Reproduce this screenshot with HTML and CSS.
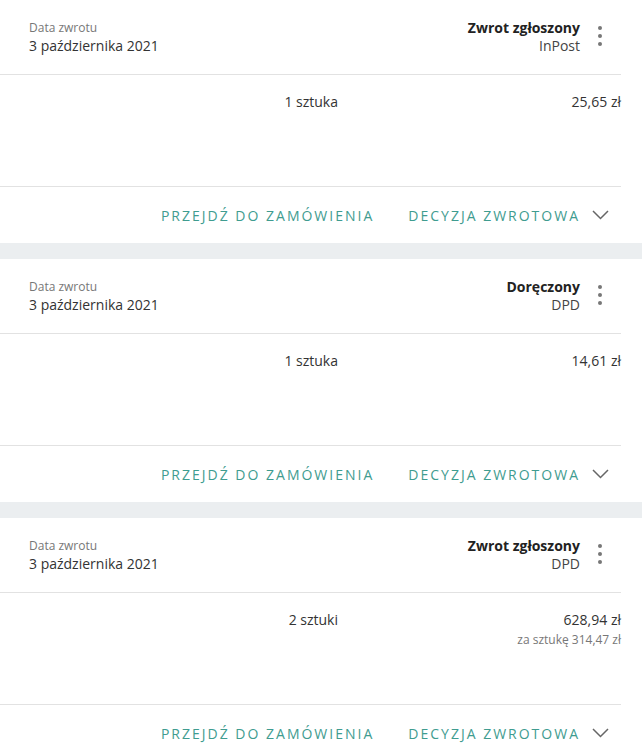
FILE: index.html
```html
<!DOCTYPE html>
<html lang="pl">
    <head>
        <meta charset="UTF-8" />
        <meta name="viewport" content="width=device-width, initial-scale=1.0" />
        <title>Zwroty</title>
        <link rel="stylesheet" href="styles.css">
    </head>
    <body>
        <div class="list">
            <div class="card">
                <div class="cardHead">
                    <div class="date">
                        <span class="label">Data zwrotu</span>
                        <span class="value">3 października 2021</span>
                    </div>
                    <div class="status">
                        <span class="statusName">Zwrot zgłoszony</span>
                        <span class="carrier">InPost</span>
                    </div>
                    <button class="more" aria-label="Więcej"><i></i><i></i><i></i></button>
                </div>
                <div class="cardBody">
                    <div class="qty">1 sztuka</div>
                    <div class="price">
                        <span class="total">25,65 zł</span>
                    </div>
                </div>
                <div class="cardFoot">
                    <a class="link" href="#">Przejdź do zamówienia</a>
                    <a class="link toggle" href="#">Decyzja zwrotowa
                        <svg width="17" height="10" viewBox="0 0 17 10"><path d="M1 1l7.5 7.5L16 1" fill="none" stroke="#666" stroke-width="1.5"/></svg>
                    </a>
                </div>
            </div>
            <div class="card">
                <div class="cardHead">
                    <div class="date">
                        <span class="label">Data zwrotu</span>
                        <span class="value">3 października 2021</span>
                    </div>
                    <div class="status">
                        <span class="statusName">Doręczony</span>
                        <span class="carrier">DPD</span>
                    </div>
                    <button class="more" aria-label="Więcej"><i></i><i></i><i></i></button>
                </div>
                <div class="cardBody">
                    <div class="qty">1 sztuka</div>
                    <div class="price">
                        <span class="total">14,61 zł</span>
                    </div>
                </div>
                <div class="cardFoot">
                    <a class="link" href="#">Przejdź do zamówienia</a>
                    <a class="link toggle" href="#">Decyzja zwrotowa
                        <svg width="17" height="10" viewBox="0 0 17 10"><path d="M1 1l7.5 7.5L16 1" fill="none" stroke="#666" stroke-width="1.5"/></svg>
                    </a>
                </div>
            </div>
            <div class="card">
                <div class="cardHead">
                    <div class="date">
                        <span class="label">Data zwrotu</span>
                        <span class="value">3 października 2021</span>
                    </div>
                    <div class="status">
                        <span class="statusName">Zwrot zgłoszony</span>
                        <span class="carrier">DPD</span>
                    </div>
                    <button class="more" aria-label="Więcej"><i></i><i></i><i></i></button>
                </div>
                <div class="cardBody">
                    <div class="qty">2 sztuki</div>
                    <div class="price">
                        <span class="total">628,94 zł</span>
                        <span class="unit">za sztukę 314,47 zł</span>
                    </div>
                </div>
                <div class="cardFoot">
                    <a class="link" href="#">Przejdź do zamówienia</a>
                    <a class="link toggle" href="#">Decyzja zwrotowa
                        <svg width="17" height="10" viewBox="0 0 17 10"><path d="M1 1l7.5 7.5L16 1" fill="none" stroke="#666" stroke-width="1.5"/></svg>
                    </a>
                </div>
            </div>
        </div>
    </body>
</html>
```

FILE: styles.css
```css
body {
    margin: 0;
    background-color: #ebeef0;
    font-family: 'Open Sans', 'Liberation Sans', sans-serif;
    color: #333;
}
.list {
    display: flex;
    flex-direction: column;
    gap: 16px;
}
.card {
    background-color: #fff;
    height: 243px;
    display: flex;
    flex-direction: column;
}
.cardHead,
.cardBody,
.cardFoot {
    width: 621px;
    box-sizing: border-box;
}
.cardHead {
    display: flex;
    align-items: flex-start;
    height: 75px;
    padding: 20px 11px 0 29px;
    border-bottom: 1px solid #e2e2e2;
}
.date,
.status {
    display: flex;
    flex-direction: column;
}
.date {
    flex: 1;
}
.label {
    font-size: 12px;
    line-height: 16px;
    color: #777;
}
.value {
    font-size: 14px;
    line-height: 20px;
    color: #333;
}
.status {
    align-items: flex-end;
}
.statusName {
    font-size: 14px;
    line-height: 16px;
    font-weight: bold;
    color: #222;
}
.carrier {
    font-size: 14px;
    line-height: 20px;
    color: #444;
}
.more {
    width: 20px;
    margin: 1px 0 0 10px;
    padding: 5px 0;
    border: none;
    background-color: initial;
    display: flex;
    flex-direction: column;
    align-items: center;
    gap: 4px;
    cursor: pointer;
}
.more i {
    width: 4px;
    height: 4px;
    border-radius: 50%;
    background-color: #777;
}
.cardBody {
    display: flex;
    height: 112px;
    padding: 17px 0 0 29px;
    border-bottom: 1px solid #e2e2e2;
    font-size: 14px;
    line-height: 20px;
}
.qty {
    width: 309px;
    text-align: right;
    color: #333;
}
.price {
    flex: 1;
    display: flex;
    flex-direction: column;
    align-items: flex-end;
}
.total {
    color: #333;
}
.unit {
    margin-top: 2px;
    font-size: 12px;
    line-height: 16px;
    color: #777;
}
.cardFoot {
    flex: 1;
    display: flex;
    justify-content: flex-end;
    align-items: center;
    gap: 34px;
    padding: 0 12px 0 0;
}
.link {
    font-size: 14px;
    text-transform: uppercase;
    letter-spacing: 2px;
    color: #3f9c90;
    text-decoration: none;
    display: flex;
    align-items: center;
}
.toggle svg {
    margin-left: 12px;
}
```
